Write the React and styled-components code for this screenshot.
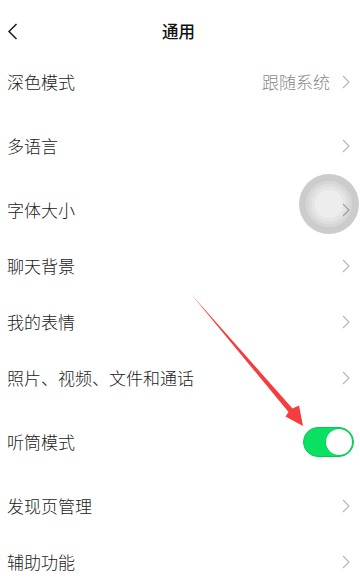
import React from 'react'
import styled, { createGlobalStyle } from 'styled-components'

const GlobalStyle = createGlobalStyle`
  html, body {
    margin: 0;
    padding: 0;
    background: #ffffff;
  }
  body {
    font-family: "Noto Sans CJK SC", "Noto Sans", sans-serif;
  }
`

const Page = styled.div`
  position: relative;
  width: 360px;
  height: 588px;
  overflow: hidden;
  background: #ffffff;
`

const Header = styled.div`
  height: 44px;
  padding-top: 9px;
  margin-bottom: 1px;
  display: grid;
  grid-template-columns: 60px 1fr 60px;
  align-items: center;
`

const BackButton = styled.div`
  display: flex;
  align-items: center;
  padding-left: 7px;
`

const Title = styled.div`
  text-align: center;
  font-size: 16.5px;
  font-weight: 500;
  color: #111111;
  margin-left: -3px;
`

const Group = styled.div`
  margin-bottom: 8px;
`

const Row = styled.div`
  height: 56px;
  display: flex;
  align-items: center;
  padding: 0 10px 0 7px;
`

const Label = styled.div`
  flex: 1;
  font-size: 17px;
  font-weight: 300;
  color: #1a1a1a;
  white-space: nowrap;
  margin-top: -2px;
`

const Value = styled.div`
  font-size: 17px;
  font-weight: 300;
  color: #8a8a8a;
  margin: -2px 12px 0 0;
`

const Switch = styled.div`
  width: 51px;
  height: 30px;
  box-sizing: border-box;
  border-radius: 15px;
  background: #0ae062;
  border: 1px solid #06c955;
  position: relative;
  margin-right: -4px;
`

const Knob = styled.div`
  position: absolute;
  top: 1px;
  right: 1px;
  width: 26px;
  height: 26px;
  border-radius: 50%;
  background: #ffffff;
  box-shadow: 0 0 0 0.5px #07c858;
`

const AssistiveTouch = styled.div`
  position: absolute;
  left: 299px;
  top: 174px;
  width: 60px;
  height: 60px;
  border-radius: 50%;
  background: radial-gradient(
    circle at center,
    rgba(0, 0, 0, 0.07) 0 14px,
    rgba(0, 0, 0, 0.1) 14.5px 17px,
    rgba(0, 0, 0, 0.13) 17.5px 20px,
    rgba(0, 0, 0, 0.16) 20.5px 23px,
    rgba(0, 0, 0, 0.2) 23.5px
  );
`

const Overlay = styled.svg`
  position: absolute;
  left: 0;
  top: 0;
  width: 360px;
  height: 588px;
  pointer-events: none;
`

const Chevron = () => (
  <svg width="8" height="14" viewBox="0 0 8 14">
    <path d="M1 1 L7 7 L1 13" fill="none" stroke="#b3b3b3" strokeWidth="1.1" />
  </svg>
)

const groups = [
  [{ label: '深色模式', value: '跟随系统' }],
  [{ label: '多语言' }],
  [
    { label: '字体大小' },
    { label: '聊天背景' },
    { label: '我的表情' },
    { label: '照片、视频、文件和通话' },
  ],
  [{ label: '听筒模式', toggle: true }],
  [{ label: '发现页管理' }, { label: '辅助功能' }],
]

const App = () => {
  return (
    <Page>
      <GlobalStyle />
      <Header>
        <BackButton>
          <svg width="11" height="17" viewBox="0 0 11 17">
            <path d="M9.5 1 L2 8.5 L9.5 16" fill="none" stroke="#1a1a1a" strokeWidth="1.5" />
          </svg>
        </BackButton>
        <Title>通用</Title>
        <div />
      </Header>

      {groups.map((items, gi) => (
        <Group key={gi}>
          {items.map((item) => (
            <Row key={item.label}>
              <Label>{item.label}</Label>
              {item.value && <Value>{item.value}</Value>}
              {item.toggle ? (
                <Switch>
                  <Knob />
                </Switch>
              ) : (
                <Chevron />
              )}
            </Row>
          ))}
        </Group>
      ))}

      <AssistiveTouch />

      <Overlay viewBox="0 0 360 588">
        <polygon
          points="191,294 288.5,412 285.5,416.5 303,426 299,405.5 292.5,408.5"
          fill="#f53d3d"
        />
      </Overlay>
    </Page>
  )
}

export default App
